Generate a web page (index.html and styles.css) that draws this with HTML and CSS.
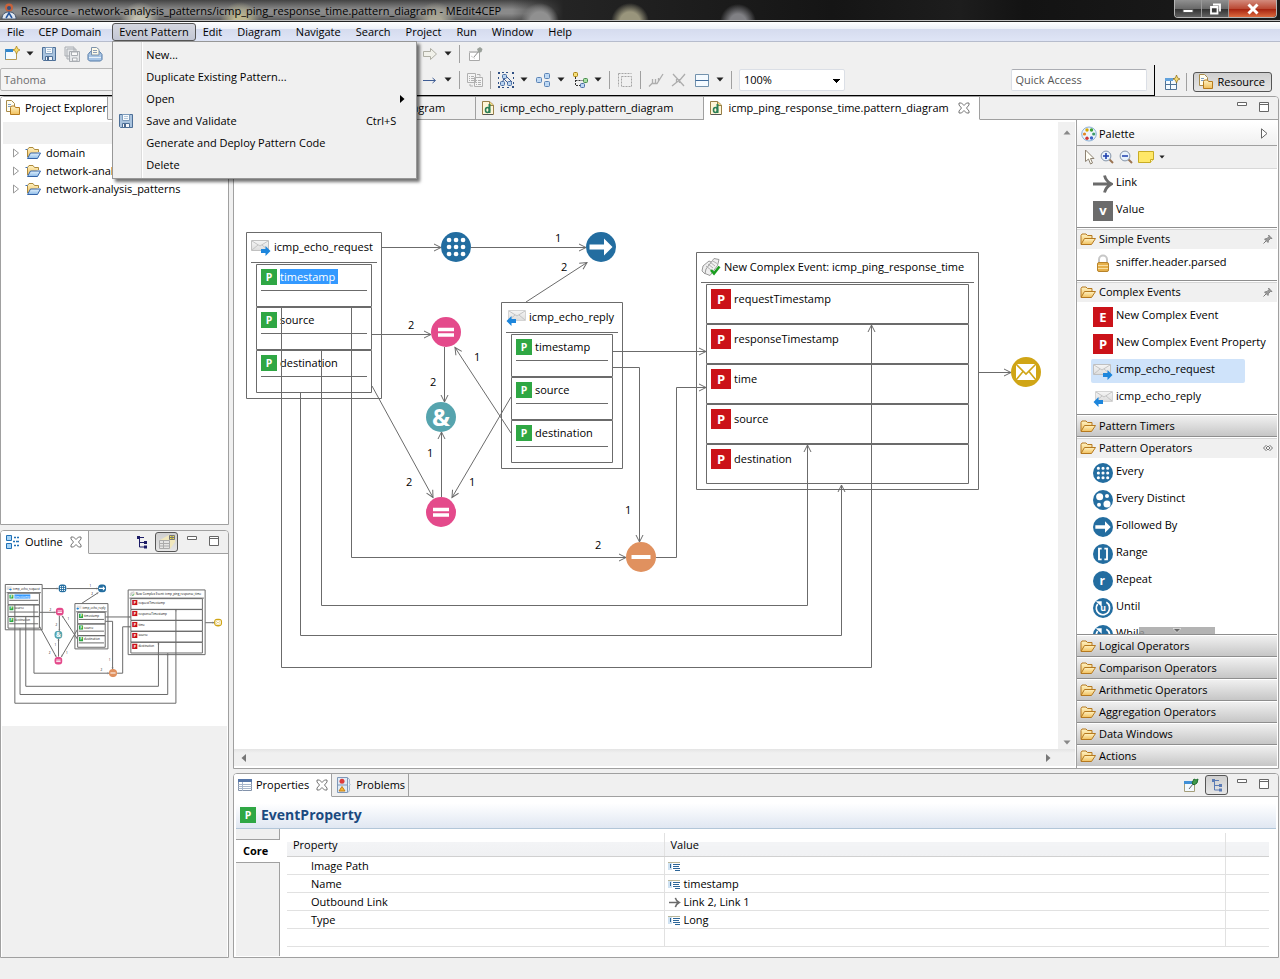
FILE: index.html
```html
<!DOCTYPE html>
<html lang="en">
<head>
<meta charset="utf-8">
<title>Resource - MEdit4CEP</title>
<link rel="stylesheet" href="styles.css">
</head>
<body>
<svg class="defs" width="0" height="0" aria-hidden="true">
<defs>
<linearGradient id="gold" x1="0" y1="0" x2="0" y2="1"><stop offset="0" stop-color="#fff3c4"/><stop offset="1" stop-color="#f0bf5c"/></linearGradient>
<linearGradient id="bluef" x1="0" y1="0" x2="0" y2="1"><stop offset="0" stop-color="#e4f2fc"/><stop offset="1" stop-color="#8dbbe8"/></linearGradient>
<linearGradient id="silver" x1="0" y1="0" x2="0" y2="1"><stop offset="0" stop-color="#f6f6f6"/><stop offset="1" stop-color="#dcdcdc"/></linearGradient>
<marker id="arrow" markerUnits="userSpaceOnUse" markerWidth="10" markerHeight="10" refX="8" refY="5" orient="auto"><path d="M1 1.5L8 5L1 8.500" class="wire"/></marker>
<symbol id="caret" viewBox="0 0 8 5"><path d="M0.500 0.500h7L4 4.500z" fill="#222"/></symbol>
<symbol id="new" viewBox="0 0 16 16"><path d="M1.500 3.500h11v10h-11z" fill="#f4fafe" stroke="#b79a54"/><path d="M1 3h8v3H1z" fill="#2f86cf"/><path d="M1.500 3v10.500" stroke="#4f8cba"/><path d="M12.500 0l1.200 2.800L16 4l-2.300 1.200L12.500 8l-1.200-2.800L9 4l2.300-1.200z" fill="#f7dc6c" stroke="#a97f12" stroke-width=".7"/></symbol>
<symbol id="save" viewBox="0 0 16 16"><path d="M1.500 1.500h13v13h-12l-1-1z" fill="#a9c3de" stroke="#4d6f97"/><path d="M4.500 1.500h7v6h-7z" fill="#f8fbfd" stroke="#7d9cbd"/><path d="M6 3.500h4M6 5.500h4" stroke="#b5c8da"/><path d="M4.500 10.500h7v4h-7z" fill="#f5f7fa" stroke="#4d6f97"/><path d="M6 11h2v3H6z" fill="#4a678c"/></symbol>
<symbol id="saveall" viewBox="0 0 16 16"><g fill="#e6e8ea" stroke="#a9adb2"><path d="M1 1h9v9H1zM3 3h9v10H3z"/><path d="M5.500 5.500h10v10h-10z"/><path d="M7.500 6h6v3.500h-6zM8.500 12h4.500v3H8.500z" fill="#fafafa"/></g></symbol>
<symbol id="print" viewBox="0 0 16 16"><path d="M1 8.500l2.500-3h9l2.500 3v5l-1.500 1.500h-11L1 13.500z" fill="#a9c6e6" stroke="#5179a6"/><path d="M4.500 9V1.500h5l2.500 2V9z" fill="#fdf9e8" stroke="#7d92aa"/><path d="M6 4.500h4M6 6.500h4" stroke="#8a9db5"/><path d="M2 11.500h12" stroke="#e8f1fa"/></symbol>
<symbol id="fwd" viewBox="0 0 16 16"><path d="M1.500 5.500h7V2.500l6 5.500-6 5.500v-3h-7z" fill="#f1f1ea" stroke="#aeaea4"/></symbol>
<symbol id="pinned" viewBox="0 0 16 16"><path d="M2.500 5.500h10v9h-10z" fill="#fff" stroke="#a8a8a8"/><path d="M2 5h9v2H2z" fill="#c3c3c3"/><path d="M7 11l5-6" stroke="#8d8d8d"/><path d="M10 3l3-2 2.500 2-1 3-3 1z" fill="#9aa09a"/><path d="M4 10l4 2.500" stroke="#cfcfcf"/></symbol>
<symbol id="pincol" viewBox="0 0 16 16"><path d="M1.500 5.500h10v9h-10z" fill="#f3f9fe" stroke="#a59e7a"/><path d="M1 4h9v3H1z" fill="#3f8fd6"/><path d="M6 12l4-5" stroke="#666"/><path d="M9 6l2-4 2 1 2-1-1 4-3 2z" fill="#3f9a4b" stroke="#1d6b2b"/></symbol>
<symbol id="line" viewBox="0 0 16 16"><path d="M1 8.500h12M10.500 6l3 2.500-3 2.500" fill="none" stroke="#3f5d95"/></symbol>
<symbol id="copyapp" viewBox="0 0 16 16"><g fill="#f4f4f4" stroke="#b0b0b0"><path d="M.5 1.500h8v9h-8zM7.500 5.500h8v9h-8z"/><path d="M2 4.500h1M4 4.500h3M2 6.500h1M4 6.500h3M2 8.500h1M4 8.500h3M9 8.500h1M11 8.500h3M9 10.500h1M11 10.500h3M9 12.500h1M11 12.500h3M10 2.500h3v2M3 12v2h3" fill="none"/></g></symbol>
<symbol id="selall" viewBox="0 0 16 16"><path d="M0 0h2v2H0zM4 0h2v1H4zM8 0h2v1H8zM14 0h2v2h-2zM0 14h2v2H0zM4 15h2v1H4zM9 15h2v1H9zM14 14h2v2h-2zM0 5h1v2H0zM0 10h1v2H0zM15 5h1v2h-1zM15 10h1v2h-1z" fill="#2f4f83"/><g fill="#b9d3ef" stroke="#4a6fa5"><rect x="4.500" y="2.500" width="4" height="4" rx="1"/><rect x="2.500" y="9.500" width="4" height="4" rx="1"/><rect x="9.500" y="9.500" width="4" height="4" rx="1"/></g><path d="M8 4l6 6M6 6l-1 3M6 7l4 4" stroke="#3f5d95"/></symbol>
<symbol id="arrange" viewBox="0 0 16 16"><g fill="#bdd8f4" stroke="#5b83b5"><rect x="1.500" y="5.500" width="5" height="5" rx="1"/><rect x="9.500" y="1.500" width="5" height="5" rx="1"/><rect x="9.500" y="9.500" width="5" height="5" rx="1"/></g></symbol>
<symbol id="tree" viewBox="0 0 16 16"><path d="M3.500 5v8.500H8M3.500 8.500h7" fill="none" stroke="#333" stroke-dasharray="2 1"/><rect x="1.500" y=".5" width="4" height="4" rx="1" fill="#f6df78" stroke="#a98314"/><rect x="11.500" y="6.500" width="4" height="4" rx="1" fill="#a9dfa3" stroke="#458b4b"/><rect x="8.500" y="11.500" width="4" height="4" rx="1" fill="#bdd8f4" stroke="#4a6fa5"/></symbol>
<symbol id="autosize" viewBox="0 0 16 16"><path d="M4.500 4.500h10v10h-10zM1.500 1.500v13M1.500 1.500h13" fill="none" stroke="#a5a5a5" stroke-dasharray="2 1"/></symbol>
<symbol id="fontup" viewBox="0 0 16 16"><path d="M1 14.500l3-3h5l6-9.500M4.500 7v4M7.500 7v4M10.500 6v3" fill="none" stroke="#adadad" stroke-width="1.300"/></symbol>
<symbol id="fontx" viewBox="0 0 16 16"><path d="M1 14l5-4 3-2 5-6M2 2l11 12M5.500 7v3M8.500 7v4" fill="none" stroke="#adadad" stroke-width="1.300"/></symbol>
<symbol id="compart" viewBox="0 0 16 16"><path d="M1.500 2.500h13v12h-13z" fill="#f4faff" stroke="#7392ad"/><path d="M1.500 8.500h13" stroke="#3f6b9b"/></symbol>
<symbol id="persp" viewBox="0 0 16 16"><path d="M1.500 3.500h11v11h-11z" fill="#f3faff" stroke="#4f7396"/><path d="M1 3h8v3H1z" fill="#62a2dc"/><path d="M1.500 9.500h11M6.500 6v8" stroke="#4f7396"/><path d="M12.500 0l1.100 2.900L16 4l-2.400 1.100L12.500 8l-1.100-2.900L9 4l2.400-1.100z" fill="#f5dc75" stroke="#8f6d11" stroke-width=".7"/></symbol>
<symbol id="resource" viewBox="0 0 16 16"><path d="M1.500.5h5l3 3v8h-8z" fill="#fffdf0" stroke="#a88b4a"/><path d="M3 4.500h3M3 6.500h4" stroke="#7f9ec4"/><path d="M5.500 7.500l1-1.500h3l1 1.500h4v7h-9z" fill="url(#gold)" stroke="#b67a1c"/></symbol>
<symbol id="openblue" viewBox="0 0 16 14"><path d="M2.500 11V3.500L4 1.500h4l1.500 2h4V6" fill="url(#gold)" stroke="#ad8a3c"/><path d="M.5 3.500h2" stroke="#3d6eb5"/><path d="M2.500 12.500l3-5.500h10L12.500 12.500z" fill="url(#bluef)" stroke="#3464a8"/></symbol>
<symbol id="folder" viewBox="0 0 16 12"><path d="M1 11V2.500L2 1h4l1.500 1.500H12V5" fill="url(#gold)" stroke="#b57920"/><path d="M1 11.500L4.500 5.500h11L11.500 11.500z" fill="url(#gold)" stroke="#b57920"/></symbol>
<symbol id="dfile" viewBox="0 0 12 16"><path d="M.5 1.500h7l4 3.500v9.500H.5z" fill="#fff6d8" stroke="#998048"/><path d="M7.500 1.500v4h4" fill="#f5dc84" stroke="#998048"/><path d="M1 14.500h10" stroke="#555"/><path d="M7.500 4v9" stroke="#2d8057" stroke-width="2"/><ellipse cx="5.500" cy="10" rx="2" ry="2.500" fill="none" stroke="#2d8057" stroke-width="1.600"/></symbol>
<symbol id="close" viewBox="0 0 12 12"><path d="M1 1h2.500L6 3.500 8.500 1H11v2L8.500 6 11 9v2H8.500L6 8.500 3.500 11H1V9l2.500-3L1 3z" fill="#fff" stroke="#666" stroke-width=".9"/></symbol>
<symbol id="min" viewBox="0 0 10 12"><path d="M.5 2.500h9v3h-9z" fill="#fff" stroke="#666"/></symbol>
<symbol id="max" viewBox="0 0 10 12"><path d="M.5 2.500h9v9h-9zM.5 4.500h9" fill="#fff" stroke="#666"/></symbol>
<symbol id="palette" viewBox="0 0 16 16"><ellipse cx="8" cy="8" rx="7.300" ry="7" fill="#eef5fc" stroke="#8ab0d6"/><circle cx="6" cy="4" r="1.700" fill="#d4a600"/><circle cx="10.500" cy="4" r="1.700" fill="#3f9f34"/><circle cx="3.500" cy="8" r="1.600" fill="#e38624"/><circle cx="12.700" cy="8" r="1.600" fill="#3c9b6b"/><circle cx="6" cy="12.300" r="1.700" fill="#d03535"/><circle cx="10.500" cy="12" r="1.700" fill="#3d64c6"/></symbol>
<symbol id="cursor" viewBox="0 0 12 16"><path d="M2.500 1v11.500l3-2.500 2 5 2-1-2-4.500h3.500z" fill="#fffef5" stroke="#8d8272"/></symbol>
<symbol id="zoomin" viewBox="0 0 14 14"><path d="M9 9l4 4" stroke="#9b7452" stroke-width="2"/><circle cx="6" cy="6" r="4.900" fill="#e8f3fc" stroke="#8594a8"/><path d="M3 6h6M6 3v6" stroke="#1c3fae" stroke-width="1.600"/></symbol>
<symbol id="zoomout" viewBox="0 0 14 14"><path d="M9 9l4 4" stroke="#9b7452" stroke-width="2"/><circle cx="6" cy="6" r="4.900" fill="#e8f3fc" stroke="#8594a8"/><path d="M3 6h6" stroke="#1c3fae" stroke-width="1.600"/></symbol>
<symbol id="note" viewBox="0 0 16 12"><path d="M.5 .5h15v8l-3 3H.5z" fill="#ffe868" stroke="#c8ac25"/><path d="M12.500 11.500v-3h3" fill="#fff6bd" stroke="#c8ac25"/></symbol>
<symbol id="tack" viewBox="0 0 10 10"><path d="M.5 9.500l3-3" stroke="#777"/><path d="M1.500 5l2.500-.5L6 2.500 5.500 1l3.500 3.500L7.500 4.500 5.500 6.500 5 8.500z" fill="#999" stroke="#777" stroke-width=".8"/></symbol>
<symbol id="unpin" viewBox="0 0 10 8"><path d="M3.500 1L.5 4l3 3M6.500 1l3 3-3 3M5 2L3 4l2 2 2-2z" fill="none" stroke="#666" stroke-width=".9"/></symbol>
<symbol id="linkarrow" viewBox="0 0 20 20"><path d="M0 10h17M11.500 1.500c1 4 3 6.500 7 8.500-4 2-6 4.500-7 8.500" fill="none" stroke="#6b6b6b" stroke-width="2.900"/></symbol>
<symbol id="value" viewBox="0 0 20 20"><path d="M0 0h20v20H0z" fill="#6b6b6b"/><text x="10" y="14" class="glyph">v</text></symbol>
<symbol id="eve" viewBox="0 0 20 20"><path d="M0 0h20v20H0z" fill="#cb1219"/><text x="10" y="15" class="glyph">E</text></symbol>
<symbol id="redp" viewBox="0 0 20 20"><path d="M0 0h20v20H0z" fill="#cb1219"/><text x="10" y="15" class="glyph">P</text></symbol>
<symbol id="greenp" viewBox="0 0 20 20"><path d="M0 0h20v20H0z" fill="#2fa744"/><text x="10" y="15" class="glyph">P</text></symbol>
<symbol id="lock" viewBox="0 0 20 20"><path d="M6 9V5.500a4 4 0 0 1 8 0V9" fill="none" stroke="#c7c7c7" stroke-width="2"/><rect x="4.500" y="8.500" width="11" height="9" rx="1.500" fill="#e6b04b" stroke="#b88329"/><path d="M5 11.500h10M5 14.500h10" stroke="#f9dfa0"/></symbol>
<symbol id="req" viewBox="0 0 20 20"><path d="M.5 3.500h17v10H.5z" fill="url(#silver)" stroke="#c0c0c0"/><path d="M1 4l8 5 8-5M1 13l6-5M17 13l-6-5" fill="none" stroke="#c4c4c4"/><path d="M10 12h4.500V9L19.500 14l-5 5v-3H10z" fill="#1d86dc"/></symbol>
<symbol id="rep" viewBox="0 0 20 20"><path d="M2.500 3.500h17v10h-17z" fill="url(#silver)" stroke="#d4d4d4"/><path d="M3 4l8 5 8-5M3 13l6-5M19 13l-6-5" fill="none" stroke="#c4c4c4"/><path d="M10 12H5.500V9L.5 14l5 5v-3H10z" fill="#1d86dc"/></symbol>
<symbol id="tags" viewBox="0 0 20 20"><g fill="#efefef" stroke="#999"><path d="M2 9l6-5 4 2-8 11-3-3z"/><path d="M5 12L13 1.500l5 1-1.500 6L9 18.500l-5-2z"/></g><path d="M5 9l5 4M7 7l5 4M9 5l5 4M11 3.500l5 3" stroke="#b0b0b0"/><path d="M10 13l3 3.500 5.500-7" fill="none" stroke="#1b9d1f" stroke-width="2.600"/></symbol>
<symbol id="every" viewBox="-15 -15 30 30"><circle r="15" fill="#236da0"/><path d="M-7 -7h.1M0 -7h.1M7 -7h.1M-7 0h.1M0 0h.1M7 0h.1M-7 7h.1M0 7h.1M7 7h.1" stroke="#fff" stroke-width="4.600" stroke-linecap="round"/></symbol>
<symbol id="distinct" viewBox="-15 -15 30 30"><circle r="15" fill="#236da0"/><circle cx="-5" cy="-5" r="5.300" fill="#fff"/><circle cx="6" cy="-6" r="3" fill="#fff"/><circle cx="6" cy="6" r="5.300" fill="#fff"/><circle cx="-6" cy="7" r="3" fill="#fff"/></symbol>
<symbol id="followed" viewBox="-15 -15 30 30"><circle r="15" fill="#236da0"/><path d="M-11.500 -2.500H3v-6L11.500 0 3 8.500V2.500h-14.500z" fill="#fff"/></symbol>
<symbol id="range" viewBox="-15 -15 30 30"><circle r="15" fill="#236da0"/><path d="M-2 -8h-4V8h4M2 -8h4V8h-4" fill="none" stroke="#fff" stroke-width="2.800"/></symbol>
<symbol id="repeat" viewBox="-15 -15 30 30"><circle r="15" fill="#236da0"/><text x="-1" y="6" class="glyph glyph-l">r</text></symbol>
<symbol id="until" viewBox="-15 -15 30 30"><circle r="15" fill="#236da0"/><path d="M-8 -6A10 10 0 1 0 5 -8.500" fill="none" stroke="#fff" stroke-width="2.600"/><path d="M-11 -10h9v8z" fill="#fff"/><text x="0" y="5" class="glyph">u</text></symbol>
<symbol id="while" viewBox="-15 -15 30 30"><circle r="15" fill="#236da0"/><path d="M-8 -6A10 10 0 1 0 5 -8.500" fill="none" stroke="#fff" stroke-width="2.600"/><path d="M-11 -10h9v8z" fill="#fff"/></symbol>
<symbol id="equal" viewBox="-15 -15 30 30"><circle r="15" fill="#e44a8b"/><path d="M-8 -2.500H8M-8 3H8" stroke="#fff" stroke-width="3.400"/></symbol>
<symbol id="and" viewBox="-15 -15 30 30"><circle r="15" fill="#56a4ae"/><text x="0" y="8.500" class="glyph glyph-xl">&amp;</text></symbol>
<symbol id="minus" viewBox="-15 -15 30 30"><circle r="15" fill="#e0915f"/><path d="M-9.500 0H9.500" stroke="#fff" stroke-width="4"/></symbol>
<symbol id="mail" viewBox="-15 -15 30 30"><circle r="15" fill="#d0a516"/><path d="M-10 -8H10V8H-10z" fill="#fff"/><path d="M-10 -8L0 2 10 -8M-10 8l7-8.500M10 8L3 -.5" fill="none" stroke="#d0a516" stroke-width="1.600"/></symbol>
<symbol id="outline" viewBox="0 0 14 16"><g fill="#a8d5f7" stroke="#2271b5"><path d="M.5 1.500h5v5h-5zM.5 9.500h5v5h-5z"/></g><path d="M8 3.500h2M11 3.500h2M7 7.500h2M10 7.500h3M8 11.500h2M11 11.500h2" stroke="#2271b5" stroke-width="1.300"/></symbol>
<symbol id="hier" viewBox="0 0 14 14"><path d="M3 2.500h6M4.500 3v9h5M4.500 7.500h5" fill="none" class="hierline"/><path d="M2 1h3v3H2zM9 6h3v3H9zM9 10.500h3v3H9z" class="hierbox"/></symbol>
<symbol id="overview" viewBox="0 0 18 16"><path d="M2 6l9-5h6v7l-5 7z" fill="#f1e8bd"/><path d="M1.500 6.500h10v8h-10z" fill="#e4e4e4" stroke="#aaa"/><path d="M2 9.500h9M2 12h9M5.500 7v7" stroke="#aaa"/><path d="M11.500 1.500h5v4h-5z" fill="#f5e53e" stroke="#777"/><path d="M14 1.500v4M11.500 3.500h5" stroke="#777"/></symbol>
<symbol id="props" viewBox="0 0 14 12"><path d="M.5 .5h13v11H.5z" fill="#fff" stroke="#8292aa"/><path d="M0 0h14v3H0z" fill="#5676a8"/><path d="M.5 5.500h13M.5 7.500h13M.5 9.500h13M4.500 3v9" stroke="#a9b7cb"/></symbol>
<symbol id="problems" viewBox="0 0 14 16"><path d="M.5 .5h10v15H.5z" fill="#dfeaf5" stroke="#7f98b8"/><path d="M.5 8h10" stroke="#7f98b8"/><path d="M11 1c3 2 0 4 2 6.500-2 2 1 5-2 8" fill="#f3f7fb" stroke="#8ea7c4"/><circle cx="5" cy="4.300" r="2.500" fill="#dd3c3c"/><path d="M5 9.500l3 4.500H2z" fill="#f6b737" stroke="#c77f14"/></symbol>
<symbol id="textprop" viewBox="0 0 13 11"><path d="M0 1h12v1H0z" fill="#b9b79a"/><path d="M0 2h4v7H0z" fill="#cfe2f2"/><path d="M2 3h1v4H2z" fill="#2d6698"/><path d="M5 3h7v1H5zM5 5h6v1H5zM5 7h7v1H5zM7 9h5v1H7z" fill="#2d6698"/></symbol>
</defs>
</svg>

<header class="titlebar">
  <svg class="appicon" viewBox="0 0 16 16"><circle cx="8" cy="4.500" r="4" fill="#c8623a"/><path d="M1 16c0-5 3-7 7-7s7 2 7 7z" fill="#dfe6ef" stroke="#44546b"/><circle cx="8" cy="5" r="2" fill="#35507c"/><path d="M5 15l3-5 3 5" fill="none" stroke="#24559c" stroke-width="1.500"/></svg>
  <h1>Resource - network-analysis_patterns/icmp_ping_response_time.pattern_diagram - MEdit4CEP</h1>
  <div class="winbtns">
    <button aria-label="Minimize"><svg width="12" height="12" viewBox="0 0 12 12"><path d="M1 6.500h10v3H1z" fill="#fff" stroke="#555"/></svg></button>
    <button aria-label="Restore"><svg width="12" height="12" viewBox="0 0 12 12"><path d="M4 1.500h7v7M2 4h6.500v6.500H2z" fill="none" stroke="#fff" stroke-width="1.800"/></svg></button>
    <button class="winclose" aria-label="Close"><svg width="12" height="12" viewBox="0 0 12 12"><path d="M1.500 1.500l9 9M10.500 1.500l-9 9" stroke="#fff" stroke-width="3"/></svg></button>
  </div>
</header>

<nav class="menubar">
  <button>File</button><button>CEP Domain</button>
  <div class="openmenu">
    <button class="pressed">Event Pattern</button>
    <div class="dropdown" role="menu">
      <button role="menuitem"><span></span>New...</button>
      <button role="menuitem"><span></span>Duplicate Existing Pattern...</button>
      <button role="menuitem"><span></span>Open<svg class="sub" width="5" height="8" viewBox="0 0 5 8"><path d="M0 0l4.500 4L0 8z"/></svg></button>
      <button role="menuitem"><span><svg width="16" height="16"><use href="#save"/></svg></span>Save and Validate<kbd>Ctrl+S</kbd></button>
      <button role="menuitem"><span></span>Generate and Deploy Pattern Code</button>
      <button role="menuitem"><span></span>Delete</button>
    </div>
  </div>
  <button>Edit</button><button>Diagram</button><button>Navigate</button><button>Search</button><button>Project</button><button>Run</button><button>Window</button><button>Help</button>
</nav>

<section class="toolbars">
  <div class="tools">
    <div class="row">
      <div class="start">
        <button class="split" aria-label="New"><svg class="i16"><use href="#new"/></svg><svg class="caret"><use href="#caret"/></svg></button>
        <button aria-label="Save"><svg class="i16"><use href="#save"/></svg></button>
        <button aria-label="Save All"><svg class="i16"><use href="#saveall"/></svg></button>
        <button aria-label="Print"><svg class="i16"><use href="#print"/></svg></button>
      </div>
      <button class="split" aria-label="Forward"><svg class="i16"><use href="#fwd"/></svg><svg class="caret"><use href="#caret"/></svg></button>
      <i class="sep"></i>
      <button aria-label="Pin Editor"><svg class="i16"><use href="#pinned"/></svg></button>
    </div>
    <div class="row row2">
      <div class="start"><input class="font" aria-label="Font" value="Tahoma" disabled></div>
      <button class="split" aria-label="Line"><svg class="i16"><use href="#line"/></svg><svg class="caret"><use href="#caret"/></svg></button>
      <i class="sep"></i>
      <button aria-label="Copy Appearance"><svg class="i16"><use href="#copyapp"/></svg></button>
      <i class="sep"></i>
      <button class="split" aria-label="Select All"><svg class="i16"><use href="#selall"/></svg><svg class="caret"><use href="#caret"/></svg></button>
      <button class="split" aria-label="Arrange"><svg class="i16"><use href="#arrange"/></svg><svg class="caret"><use href="#caret"/></svg></button>
      <button class="split" aria-label="Align"><svg class="i16"><use href="#tree"/></svg><svg class="caret"><use href="#caret"/></svg></button>
      <i class="sep"></i>
      <button aria-label="Auto Size"><svg class="i16"><use href="#autosize"/></svg></button>
      <i class="sep"></i>
      <button aria-label="Show Labels"><svg class="i16"><use href="#fontup"/></svg></button>
      <button aria-label="Hide Labels"><svg class="i16"><use href="#fontx"/></svg></button>
      <button class="split" aria-label="Compartments"><svg class="i16"><use href="#compart"/></svg><svg class="caret"><use href="#caret"/></svg></button>
      <i class="sep"></i>
      <select class="zoom" aria-label="Zoom"><option>100%</option></select>
      <input class="quick" aria-label="Quick Access" placeholder="Quick Access">
    </div>
  </div>
  <div class="perspective">
    <button aria-label="Open Perspective"><svg class="i16"><use href="#persp"/></svg></button>
    <i class="sep"></i>
    <button class="resbtn"><svg class="i16"><use href="#resource"/></svg>Resource</button>
  </div>
</section>

<main class="workbench">
  <div class="leftcol">
    <section class="view">
      <div class="tabs"><div class="tab active first"><svg class="i16"><use href="#resource"/></svg>Project Explorer</div><div class="rest"></div></div>
      <div class="explorer">
        <div class="strip"></div>
        <ul class="treelist">
          <li><svg class="twist" viewBox="0 0 6 10"><path d="M.5 1l5 4-5 4z"/></svg><svg class="fold"><use href="#openblue"/></svg>domain</li>
          <li><svg class="twist" viewBox="0 0 6 10"><path d="M.5 1l5 4-5 4z"/></svg><svg class="fold"><use href="#openblue"/></svg>network-analysis</li>
          <li><svg class="twist" viewBox="0 0 6 10"><path d="M.5 1l5 4-5 4z"/></svg><svg class="fold"><use href="#openblue"/></svg>network-analysis_patterns</li>
        </ul>
      </div>
    </section>
    <section class="view">
      <div class="tabs"><div class="tab active first outl"><svg class="i16"><use href="#outline"/></svg>Outline<button class="x" aria-label="Close Outline"><svg class="i12"><use href="#close"/></svg></button></div>
        <div class="rest">
          <button aria-label="Tree"><svg class="i14 navy"><use href="#hier"/></svg></button>
          <button class="toggled" aria-label="Overview"><svg width="18" height="16"><use href="#overview"/></svg></button>
          <button aria-label="Minimize"><svg class="mm"><use href="#min"/></svg></button>
          <button aria-label="Maximize"><svg class="mm"><use href="#max"/></svg></button>
        </div>
      </div>
      <div class="overview">
        <svg class="mini"><g transform="translate(-64 -33) scale(.273)"><use href="#diagram"/></g></svg>
        <div class="blank"></div>
      </div>
    </section>
  </div>

  <div class="rightcol">
    <section class="view">
      <div class="tabs">
        <div class="tab ed"><svg class="dico"><use href="#dfile"/></svg>icmp_echo_request.pattern_diagram</div>
        <div class="tab ed"><svg class="dico"><use href="#dfile"/></svg>icmp_echo_reply.pattern_diagram</div>
        <div class="tab ed active"><svg class="dico"><use href="#dfile"/></svg>icmp_ping_response_time.pattern_diagram<button class="x" aria-label="Close editor"><svg class="i12"><use href="#close"/></svg></button></div>
        <div class="rest"><button aria-label="Minimize"><svg class="mm"><use href="#min"/></svg></button><button aria-label="Maximize"><svg class="mm"><use href="#max"/></svg></button></div>
      </div>
      <div class="editor">
        <div class="canvaswrap">
          <svg class="canvas"><g transform="translate(-234 -120)"><g id="diagram">
            <g class="node">
              <rect x="246.500" y="232.500" width="135" height="166"/><path d="M251 262.500h126"/>
              <rect x="256.500" y="264.500" width="115" height="42"/><rect x="256.500" y="307.500" width="115" height="42"/><rect x="256.500" y="350.500" width="115" height="42"/>
              <path d="M261 290.500h106M261 333.500h106M261 376.500h106"/>
            </g>
            <use href="#req" x="251" y="237" width="20" height="20"/><text x="274" y="251">icmp_echo_request</text>
            <use href="#greenp" x="261" y="269" width="16" height="16"/><use href="#greenp" x="261" y="312" width="16" height="16"/><use href="#greenp" x="261" y="355" width="16" height="16"/>
            <rect x="280" y="269" width="58" height="15" fill="#3399ff"/><text x="280" y="281" class="sel">timestamp</text><text x="280" y="324">source</text><text x="280" y="367">destination</text>
            <g class="node">
              <rect x="501.500" y="302.500" width="121" height="166"/><path d="M506 332.500h112"/>
              <rect x="511.500" y="334.500" width="101" height="42"/><rect x="511.500" y="377.500" width="101" height="42"/><rect x="511.500" y="420.500" width="101" height="42"/>
              <path d="M516 360.500h92M516 403.500h92M516 446.500h92"/>
            </g>
            <use href="#rep" x="506" y="307" width="20" height="20"/><text x="529" y="321">icmp_echo_reply</text>
            <use href="#greenp" x="516" y="339" width="16" height="16"/><use href="#greenp" x="516" y="382" width="16" height="16"/><use href="#greenp" x="516" y="425" width="16" height="16"/>
            <text x="535" y="351">timestamp</text><text x="535" y="394">source</text><text x="535" y="437">destination</text>
            <g class="node">
              <rect x="696.500" y="252.500" width="282" height="237"/><path d="M701 282.500h273"/>
              <rect x="706.500" y="284.500" width="262" height="39"/><rect x="706.500" y="324.500" width="262" height="39"/><rect x="706.500" y="364.500" width="262" height="39"/><rect x="706.500" y="404.500" width="262" height="39"/><rect x="706.500" y="444.500" width="262" height="39"/>
            </g>
            <use href="#tags" x="701" y="257" width="20" height="20"/><text x="724" y="271">New Complex Event: icmp_ping_response_time</text>
            <use href="#redp" x="711" y="289" width="20" height="20"/><use href="#redp" x="711" y="329" width="20" height="20"/><use href="#redp" x="711" y="369" width="20" height="20"/><use href="#redp" x="711" y="409" width="20" height="20"/><use href="#redp" x="711" y="449" width="20" height="20"/>
            <text x="734" y="303">requestTimestamp</text><text x="734" y="343">responseTimestamp</text><text x="734" y="383">time</text><text x="734" y="423">source</text><text x="734" y="463">destination</text>
            <g class="links">
              <path d="M382 247.500H441"/><path d="M471 247.500H586"/><path d="M526 302L587 262.500"/><path d="M372 334.500H431"/><path d="M444.500 347V402"/><path d="M511 433L455 347.500"/><path d="M511 397L452 497.500"/><path d="M372 386L433 497.500"/><path d="M441.500 497V432"/><path d="M613 351.500H706"/><path d="M613 367.500H639.500V542"/><path d="M656 557.500H676.500V387.500H706"/><path d="M351.500 307V557.500H626"/><path d="M321.500 350V605.500H807.500V445"/><path d="M300.500 393V635.500H841.500V485"/><path d="M281.500 307V667.500H871.500V325"/><path d="M979 372.500H1011"/>
            </g>
            <use href="#every" x="441" y="232" width="30" height="30"/><use href="#followed" x="586" y="232" width="30" height="30"/><use href="#equal" x="431" y="317" width="30" height="30"/><use href="#and" x="426" y="402" width="30" height="30"/><use href="#equal" x="426" y="497" width="30" height="30"/><use href="#minus" x="626" y="542" width="30" height="30"/><use href="#mail" x="1011" y="357" width="30" height="30"/>
            <text x="555" y="242">1</text><text x="561" y="271">2</text><text x="408" y="329">2</text><text x="474" y="361">1</text><text x="430" y="386">2</text><text x="427" y="457">1</text><text x="406" y="486">2</text><text x="469" y="486">1</text><text x="625" y="514">1</text><text x="595" y="549">2</text>
          </g></g></svg>
          <div class="vbar"><svg class="caret grey flip"><use href="#caret"/></svg><svg class="caret grey"><use href="#caret"/></svg></div>
          <div class="hbar"><svg width="5" height="8" viewBox="0 0 5 8"><path d="M5 0L.5 4 5 8z"/></svg><svg width="5" height="8" viewBox="0 0 5 8"><path d="M0 0l4.500 4L0 8z"/></svg></div>
        </div>
        <aside class="palette">
          <div class="palhead"><svg class="i16"><use href="#palette"/></svg>Palette<svg class="palarrow" viewBox="0 0 7 11"><path d="M.5 .8l5.500 4.700-5.500 4.700z"/></svg></div>
          <div class="paltools">
            <button aria-label="Select"><svg width="12" height="16"><use href="#cursor"/></svg></button><button aria-label="Zoom in"><svg class="i14"><use href="#zoomin"/></svg></button><button aria-label="Zoom out"><svg class="i14"><use href="#zoomout"/></svg></button><button class="notebtn" aria-label="Note"><svg width="16" height="12"><use href="#note"/></svg><svg width="6" height="4"><use href="#caret"/></svg></button>
          </div>
          <ul class="items"><li><svg><use href="#linkarrow"/></svg>Link</li><li><svg><use href="#value"/></svg>Value</li></ul>
          <button class="drawer open"><svg class="fico"><use href="#folder"/></svg>Simple Events<svg class="tack"><use href="#tack"/></svg></button>
          <ul class="items"><li><svg><use href="#lock"/></svg>sniffer.header.parsed</li></ul>
          <button class="drawer open"><svg class="fico"><use href="#folder"/></svg>Complex Events<svg class="tack"><use href="#tack"/></svg></button>
          <ul class="items"><li><svg><use href="#eve"/></svg>New Complex Event</li><li><svg><use href="#redp"/></svg>New Complex Event Property</li><li class="picked"><svg><use href="#req"/></svg>icmp_echo_request</li><li><svg><use href="#rep"/></svg>icmp_echo_reply</li></ul>
          <button class="drawer"><svg class="fico"><use href="#folder"/></svg>Pattern Timers</button>
          <button class="drawer open"><svg class="fico"><use href="#folder"/></svg>Pattern Operators<svg class="tack"><use href="#unpin"/></svg></button>
          <div class="clip">
            <ul class="items"><li><svg><use href="#every"/></svg>Every</li><li><svg><use href="#distinct"/></svg>Every Distinct</li><li><svg><use href="#followed"/></svg>Followed By</li><li><svg><use href="#range"/></svg>Range</li><li><svg><use href="#repeat"/></svg>Repeat</li><li><svg><use href="#until"/></svg>Until</li><li><svg><use href="#while"/></svg>While</li></ul>
            <button class="more" aria-label="Scroll down"><svg width="8" height="5" viewBox="0 0 8 5"><path d="M0 .5h8L4 4.500z" fill="#666" stroke="#fff" stroke-width=".6"/></svg></button>
          </div>
          <button class="drawer"><svg class="fico"><use href="#folder"/></svg>Logical Operators</button>
          <button class="drawer"><svg class="fico"><use href="#folder"/></svg>Comparison Operators</button>
          <button class="drawer"><svg class="fico"><use href="#folder"/></svg>Arithmetic Operators</button>
          <button class="drawer"><svg class="fico"><use href="#folder"/></svg>Aggregation Operators</button>
          <button class="drawer"><svg class="fico"><use href="#folder"/></svg>Data Windows</button>
          <button class="drawer"><svg class="fico"><use href="#folder"/></svg>Actions</button>
        </aside>
      </div>
    </section>

    <section class="view">
      <div class="tabs">
        <div class="tab active first"><svg width="14" height="12"><use href="#props"/></svg>Properties<button class="x" aria-label="Close Properties"><svg class="i12"><use href="#close"/></svg></button></div>
        <div class="tab prob"><svg width="14" height="16"><use href="#problems"/></svg>Problems</div>
        <div class="rest"><button aria-label="Pin"><svg class="i16"><use href="#pincol"/></svg></button><button class="toggled" aria-label="Categories"><svg class="i14 steel"><use href="#hier"/></svg></button><button aria-label="Minimize"><svg class="mm"><use href="#min"/></svg></button><button aria-label="Maximize"><svg class="mm"><use href="#max"/></svg></button></div>
      </div>
      <div class="props">
        <h2><svg class="i16"><use href="#greenp"/></svg>EventProperty</h2>
        <div class="propbody">
          <div class="sidetabs"><div class="gap"></div><button>Core</button><div class="fill"></div></div>
          <table>
            <thead><tr><th>Property</th><th class="val">Value</th><th class="end"></th></tr></thead>
            <tbody>
              <tr><td>Image Path</td><td><svg class="pico"><use href="#textprop"/></svg></td><td></td></tr>
              <tr><td>Name</td><td><svg class="pico"><use href="#textprop"/></svg>timestamp</td><td></td></tr>
              <tr><td>Outbound Link</td><td><svg class="pico"><use href="#linkarrow"/></svg>Link 2, Link 1</td><td></td></tr>
              <tr><td>Type</td><td><svg class="pico"><use href="#textprop"/></svg>Long</td><td></td></tr>
              <tr><td></td><td></td><td></td></tr>
            </tbody>
          </table>
        </div>
      </div>
    </section>
  </div>
</main>
<footer class="status"></footer>
</body>
</html>
```
FILE: styles.css
```css
* { box-sizing: border-box; }
body {
  margin: 0;
  height: 100vh;
  display: flex;
  flex-direction: column;
  background: #f0f0f0;
  color: #000;
  font-family: "Open Sans", "Noto Sans", sans-serif;
  font-size: 11px;
  line-height: 16px;
  overflow: hidden;
}
button, input, select { font: inherit; color: inherit; }
button { border: 0; padding: 0; background: none; display: flex; align-items: center; white-space: nowrap; }
ul { list-style: none; margin: 0; padding: 0; }
svg { flex: none; display: block; }
.defs { position: absolute; }
.i16 { width: 16px; height: 16px; }
.i14 { width: 14px; height: 14px; }
.i12 { width: 12px; height: 12px; }
.caret { width: 8px; height: 5px; }
.glyph { font: bold 13px "Open Sans", sans-serif; fill: #fff; text-anchor: middle; }
.glyph-l { font-size: 18px; }
.glyph-xl { font-size: 24px; }

/* Title bar */
.titlebar {
  flex: none;
  height: 22px;
  display: flex;
  align-items: center;
  border-bottom: 1px solid #222;
  box-shadow: inset 0 -1px #c0c0c0;
  background:
    radial-gradient(circle at 140px 22px, #c2bfae 6px, transparent 20px),
    radial-gradient(circle at 240px 22px, #bcb78f 6px, transparent 20px),
    radial-gradient(circle at 436px 22px, #a9a695 6px, transparent 20px),
    radial-gradient(circle at 540px 22px, #909090 10px, transparent 19px),
    radial-gradient(circle at 630px 22px, #99957c 10px, transparent 19px),
    radial-gradient(circle at 738px 22px, #808084 8px, transparent 18px),
    linear-gradient(90deg, transparent 40%, #242424 44%, #151515 65%, #1d1d1d 75%, #131313 80%, #1c1c1c),
    linear-gradient(#444, #8a8a8a 45%, #8a8a8a 65%, #555);
}
.appicon { width: 16px; height: 16px; margin-left: 1px; }
.titlebar h1 { flex: 1; margin: 0 0 0 4px; font-size: 11px; font-weight: normal; white-space: nowrap; }
.winbtns {
  align-self: flex-start;
  display: flex;
  height: 18px;
  margin-right: 3px;
  border: 1px solid #b5b5b5;
  border-top: 0;
  border-radius: 0 0 4px 4px;
  overflow: hidden;
}
.winbtns button { width: 27px; justify-content: center; border-right: 1px solid #999; background: linear-gradient(#909090, #6a6a6a 50%, #303030 52%, #626262); }
.winbtns .winclose { width: 47px; border: 0; background: linear-gradient(#d38b7d, #bb4a35 50%, #a3200e 52%, #dc6a3e); }

/* Menu bar */
.menubar {
  flex: none;
  height: 20px;
  display: flex;
  border-bottom: 1px solid #b6bccc;
  background: linear-gradient(#fff, #eef1f8 35%, #d5dbee 36%, #dfe5f6);
}
.menubar > button, .openmenu > button { padding: 0 7px; height: 19px; }
.openmenu { position: relative; margin: 0 0 0 4px; }
.openmenu ~ button { padding: 0 8px 0 7px; }
.openmenu > .pressed { padding: 0 6px; height: 18px; margin-top: 1px; border: 1px solid #555; border-radius: 3px; background: linear-gradient(#d5d7df, #c2c6d4); }
.dropdown {
  position: absolute;
  z-index: 5;
  top: 19px;
  left: 0;
  width: 305px;
  padding: 2px 3px;
  border: 1px solid #979797;
  background: linear-gradient(90deg, #f0f0f0 28px, #dcdcdc 28px, #dcdcdc 29px, #fff 29px, #fff 30px, #f0f0f0 30px);
  box-shadow: 3px 3px 3px rgba(0, 0, 0, .55);
}
.dropdown button { width: 100%; height: 22px; }
.dropdown span { width: 30px; padding-left: 2px; }
.dropdown kbd { margin: 0 17px 0 auto; font: inherit; }
.dropdown .sub { margin: 0 8px 0 auto; }

/* Tool bars */
.toolbars { flex: none; height: 54px; display: flex; }
.tools { flex: 1; border-bottom: 1px solid #000; border-right: 1px solid #000; border-image: linear-gradient(#f0f0f0 24px, #000 24px) 1; }
.row { display: flex; align-items: center; gap: 7px; height: 23px; }
.row2 { height: 29px; }
.start { width: 415px; padding-left: 4px; display: flex; gap: 7px; }
.row2 .start { padding: 0; }
.split { gap: 6px; }
.sep { width: 1px; height: 18px; background: #a0a0a0; }
.font { width: 180px; height: 23px; padding: 0 3px; border: 1px solid #b8b8b8; border-radius: 2px; background: #f4f4f4; color: #6d6d6d; }
.zoom {
  appearance: none;
  width: 106px;
  height: 22px;
  padding: 0 4px;
  border: 1px solid #dbdfe6;
  border-radius: 2px;
  background: linear-gradient(to bottom right, #000 50%, transparent 50%) 97px 9px / 4px 4px no-repeat, linear-gradient(to bottom left, #000 50%, transparent 50%) 93px 9px / 4px 4px no-repeat, #fff;
}
.quick { width: 136px; height: 22px; margin-left: auto; margin-right: 7px; padding: 0 3px; border: 1px solid #dbdfe6; border-top-color: #abadb3; border-radius: 2px; background: #fff; }
.quick::placeholder { color: #555; }
.perspective { display: flex; align-items: flex-end; gap: 6px; padding: 0 8px 4px 9px; }
.perspective > button, .perspective > .sep { margin-bottom: 1px; }
.perspective > .resbtn { height: 20px; margin: 0; padding: 0 6px 0 4px; gap: 3px; border: 1px solid #555; border-radius: 3px; background: linear-gradient(#cfcfcf, #e6e6e6); }

/* Workbench */
.workbench { flex: 1; min-height: 0; display: flex; gap: 4px; padding-right: 1px; }
.leftcol { width: 229px; display: grid; grid-template-rows: 1fr 1fr; gap: 5px; }
.rightcol { flex: 1; min-width: 0; display: grid; grid-template-rows: minmax(0, 1fr) 185px; gap: 4px; }
.view { min-height: 0; display: flex; flex-direction: column; border: 1px solid #a0a0a0; border-radius: 4px 4px 0 0; background: #fff; overflow: hidden; }
.tabs { flex: none; height: 23px; display: flex; background: #f0f0f0; white-space: nowrap; }
.tab { display: flex; align-items: center; gap: 4px; padding-left: 5px; border-right: 1px solid #a0a0a0; border-bottom: 1px solid #a0a0a0; }
.tab.active { background: #fff; border-bottom-color: #fff; }
.tab.first { padding-left: 4px; }
.tab.outl { padding-right: 3px; }
.tab.ed { padding: 0 30px 0 6px; gap: 6px; }
.tab.ed.active { padding-right: 6px; }
.tab .x { margin: 0 3px; }
.tab.prob { padding: 0 3px 0 5px; gap: 5px; }
.dico { width: 12px; height: 16px; }
.rest { flex: 1; display: flex; align-items: center; justify-content: flex-end; gap: 6px; padding-right: 6px; border-bottom: 1px solid #a0a0a0; }
.mm { width: 10px; height: 12px; margin: 0 3px 4px; }
.toggled { width: 23px; height: 20px; justify-content: center; border: 1px solid #555; border-radius: 3px; background: linear-gradient(#cfcfcf, #e6e6e6); }
.hierline { stroke: currentColor; }
.hierbox { fill: currentColor; }
.navy { color: #1b1b66; }
.steel { color: #5b7bb5; }
.status { flex: none; height: 21px; }

/* Explorer and outline */
.explorer { padding: 2px; }
.strip { height: 22px; background: #f0f0f0; }
.treelist li { display: flex; align-items: center; height: 18px; padding-left: 10px; }
.twist { width: 6px; height: 10px; fill: #fff; stroke: #999; }
.fold { width: 16px; height: 14px; margin: 0 5px 0 6px; }
.overview { flex: 1; display: flex; flex-direction: column; padding: 0 1px; }
.mini { width: 100%; height: 172px; }
.blank { flex: 1; background: #f0f0f0; }

/* Diagram */
.editor { flex: 1; min-height: 0; display: flex; padding-right: 1px; }
.canvaswrap { flex: 1; min-width: 0; display: grid; grid-template: 1fr 17px / 1fr 17px; padding: 0 1px 2px 0; }
.canvas { width: 100%; height: 100%; overflow: hidden; }
.node, .wire, .links { fill: none; stroke: #6b6b6b; }
.node rect, .node path, .wire, .links path { vector-effect: non-scaling-stroke; }
.links path { marker-end: url(#arrow); }
.sel { fill: #fff; }
.vbar { display: flex; flex-direction: column; justify-content: space-between; align-items: center; padding: 8px 0 4px; margin-top: 2px; background: #f0f0f0; }
.hbar { grid-column: 1 / 3; display: flex; justify-content: space-between; align-items: center; padding: 0 24px 0 7px; background: linear-gradient(#e4e4e4, #f0f0f0 4px); fill: #777; }
.grey { opacity: .5; }
.flip { transform: rotate(180deg); }

/* Palette */
.palette { width: 201px; display: flex; flex-direction: column; padding: 2px 0; border-left: 1px solid #a0a0a0; }
.palhead { flex: none; height: 24px; display: flex; align-items: center; gap: 2px; padding: 0 9px 0 4px; border-bottom: 1px solid #a0a0a0; background: linear-gradient(#fff, #f0f0f0); }
.palarrow { width: 7px; height: 11px; margin-left: auto; fill: #fff; stroke: #666; }
.paltools { flex: none; height: 23px; display: flex; align-items: center; gap: 5px; padding-left: 6px; border-bottom: 1px solid #d8d8d8; background: #f0f0f0; }
.notebtn { gap: 5px; }
.items { flex: none; padding: 3px 0 1px; }
.items li { display: flex; width: fit-content; height: 24px; margin: 0 0 3px 14px; padding-left: 2px; gap: 3px; line-height: 20px; white-space: nowrap; }
.items svg { width: 20px; height: 20px; margin-top: 2px; }
.items .picked { width: 154px; background: #cfe3fa; border-radius: 2px; }
.drawer { flex: none; height: 22px; gap: 3px; padding: 0 4px 0 3px; border-top: 1px solid #8e8e8e; box-shadow: inset 0 1px #fff; background: linear-gradient(#f2f2f2, #c6c6c6); }
.drawer.open { background: #f0f0f0; box-shadow: inset 0 1px #fff, inset 0 2px #d6d6d6; }
.fico { width: 16px; height: 12px; }
.tack { width: 10px; height: 10px; margin-left: auto; }
.clip { flex: 1; min-height: 0; position: relative; overflow: hidden; }
.more { position: absolute; bottom: 0; left: 62px; width: 76px; height: 7px; justify-content: center; background: rgba(160, 160, 160, .8); }

/* Properties */
.props { flex: 1; display: flex; flex-direction: column; padding: 0 2px 1px; }
.props h2 { flex: none; display: flex; align-items: center; gap: 5px; height: 32px; margin: 0; padding: 4px 4px 0; border-bottom: 1px solid #b2c6d8; background: linear-gradient(#fff 20%, #e0e7f2); color: #1b4a80; font-size: 14px; }
.propbody { flex: 1; display: flex; }
.sidetabs { width: 44px; display: flex; flex-direction: column; }
.gap, .fill { background: #f0f0f0; border-right: 1px solid #a0a0a0; }
.gap { height: 10px; }
.fill { flex: 1; }
.sidetabs button { height: 24px; padding-left: 7px; border: solid #a0a0a0; border-width: 1px 0; font-weight: bold; }
table { flex: 1; margin: 4px 7px 0; border-collapse: collapse; table-layout: fixed; align-self: flex-start; }
th, td { padding: 0; border-bottom: 1px solid #e1e1e1; border-right: 1px solid #e1e1e1; text-align: left; font-weight: normal; height: 18px; line-height: 17px; }
th:last-child, td:last-child { border-right: 0; }
th { height: 23px; padding-left: 6px; border-bottom-color: #d0d0d0; background: linear-gradient(#fff 40%, #f3f4f6 41%, #f0f1f3); }
th:first-child { width: 377px; }
.end { width: 44px; }
td:first-child { padding-left: 24px; }
td svg { display: inline-block; vertical-align: middle; }
.pico { width: 13px; height: 11px; margin: 0 3px; }
```
